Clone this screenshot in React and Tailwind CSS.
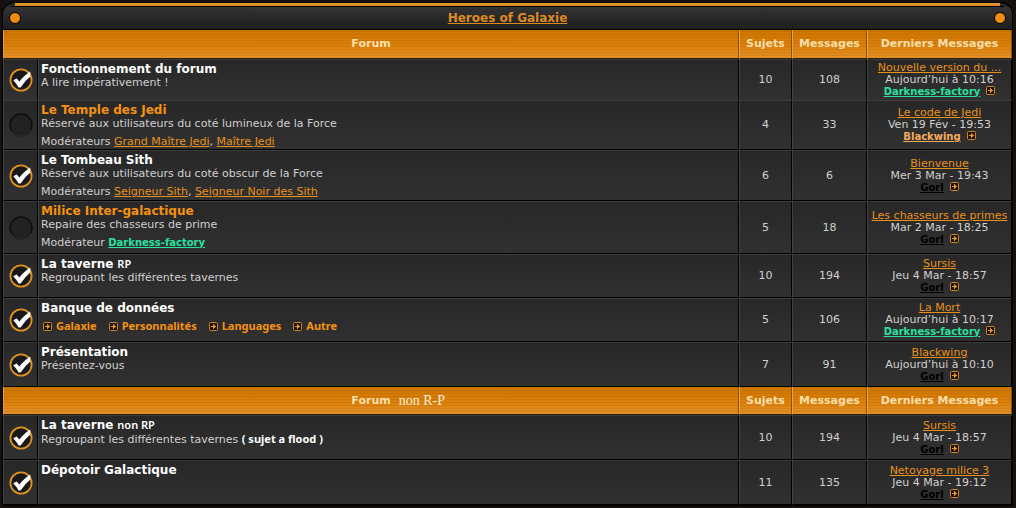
import React from "react";
import clsx from "clsx";

const sections = [
  {
    id: "rp",
    note: "",
    height: "h-[29px]",
    forums: [
      {
        title: "Fonctionnement du forum",
        description: "A lire impérativement !",
        unread: true,
        seamless: true,
        height: "h-[41px]",
        topics: 10,
        posts: 108,
        last: { title: "Nouvelle version du ...", date: "Aujourd’hui à 10:16", author: "Darkness-factory" },
      },
      {
        title: "Le Temple des Jedi",
        description: "Réservé aux utilisateurs du coté lumineux de la Force",
        moderators: ["Grand Maître Jedi", "Maître Jedi"],
        height: "h-[50px]",
        topics: 4,
        posts: 33,
        last: { title: "Le code de Jedi", date: "Ven 19 Fév - 19:53", author: "Blackwing" },
      },
      {
        title: "Le Tombeau Sith",
        description: "Réservé aux utilisateurs du coté obscur de la Force",
        moderators: ["Seigneur Sith", "Seigneur Noir des Sith"],
        unread: true,
        height: "h-[51px]",
        topics: 6,
        posts: 6,
        last: { title: "Bienvenue", date: "Mer 3 Mar - 19:43", author: "Gorl" },
      },
      {
        title: "Milice Inter-galactique",
        description: "Repaire des chasseurs de prime",
        moderators: ["Darkness-factory"],
        height: "h-[53px]",
        topics: 5,
        posts: 18,
        last: { title: "Les chasseurs de primes", date: "Mar 2 Mar - 18:25", author: "Gorl" },
      },
      {
        title: "La taverne",
        suffix: "RP",
        description: "Regroupant les différentes tavernes",
        unread: true,
        height: "h-[44px]",
        topics: 10,
        posts: 194,
        last: { title: "Sursis", date: "Jeu 4 Mar - 18:57", author: "Gorl" },
      },
      {
        title: "Banque de données",
        subforums: ["Galaxie", "Personnalités", "Languages", "Autre"],
        unread: true,
        height: "h-[44px]",
        topics: 5,
        posts: 106,
        last: { title: "La Mort", date: "Aujourd’hui à 10:17", author: "Darkness-factory" },
      },
      {
        title: "Présentation",
        description: "Présentez-vous",
        unread: true,
        height: "h-[45px]",
        topics: 7,
        posts: 91,
        last: { title: "Blackwing", date: "Aujourd’hui à 10:10", author: "Gorl" },
      },
    ],
  },
  {
    id: "non-rp",
    note: "non R-P",
    height: "h-[28px]",
    forums: [
      {
        title: "La taverne",
        suffix: "non RP",
        description: "Regroupant les différentes tavernes",
        remark: "( sujet a flood )",
        unread: true,
        height: "h-[45px]",
        topics: 10,
        posts: 194,
        last: { title: "Sursis", date: "Jeu 4 Mar - 18:57", author: "Gorl" },
      },
      {
        title: "Dépotoir Galactique",
        unread: true,
        height: "h-[45px]",
        topics: 11,
        posts: 135,
        last: { title: "Netoyage milice 3", date: "Jeu 4 Mar - 19:12", author: "Gorl" },
      },
    ],
  },
];

const userColors = {
  "Darkness-factory": "text-[10px] font-bold text-[#2be0a0]",
  Blackwing: "text-[10px] font-bold text-[#f7ac5c]",
  Gorl: "text-[10px] font-bold text-black",
};

const head = "border-l border-r border-b border-l-[#eda040] border-r-[#8a5200] border-b-[#2a1c08] p-0 text-center align-middle font-bold";

const StatusIcon = ({ unread }) => (
  <svg
    className="mx-auto block h-[26px] w-[26px]"
    viewBox="0 0 26 26"
    role="img"
    aria-label={unread ? "Nouveaux messages" : "Pas de nouveaux messages"}
  >
    {unread ? (
      <>
        <circle cx="13" cy="13" r="10.6" fill="#191919" stroke="#dd8f20" strokeWidth="1.8" />
        <path d="M5.2 13.2 8.6 11.4 11.4 14.6Q15 9.5 22.3 4.6V9.4Q17 13.5 12.6 20.6H10.6Q8.6 16.6 5.2 13.2Z" fill="#fff" />
      </>
    ) : (
      <>
        <circle cx="13" cy="13" r="11" fill="#222" stroke="#0d0d0d" strokeWidth="1.3" />
        <path d="M3 18.5A11.8 11.8 0 0 0 23 18.5" fill="none" stroke="#3c3c3c" strokeWidth="0.8" />
      </>
    )}
  </svg>
);

const ArrowIcon = () => (
  <svg className="block h-[9px] w-[9px] shrink-0" viewBox="0 0 9 9" aria-hidden="true">
    <rect x="0.5" y="0.5" width="8" height="8" rx="1" fill="#1c1408" stroke="#d08420" />
    <path d="M2 4.5H6.6M4.5 2.2V6.8" fill="none" stroke="#e8982c" />
    <path d="M4.8 2.6 7 4.5 4.8 6.4Z" fill="#e8982c" />
  </svg>
);

const Screw = () => (
  <span className="h-3 w-3 rounded-full border border-black bg-[#ef8d10]" />
);

const SectionHead = ({ note, height }) => (
  <tr
    className={clsx(
      "bg-[repeating-linear-gradient(0deg,rgba(0,0,0,0.06)_0_1px,transparent_1px_3px),linear-gradient(#cd7600,#dc800b_55%,#e39128)] text-[11px] leading-[14px] text-[#fbdfab]",
      height
    )}
  >
    <th colSpan={2} className={head}>
      <div className="grid grid-cols-[1fr_auto_1fr] items-center gap-2">
        <span className="col-start-2">Forum</span>
        <span className="text-left font-['Liberation_Serif',serif] text-[14px] font-normal text-[#fdf0d8]">
          {note}
        </span>
      </div>
    </th>
    <th className={head}>Sujets</th>
    <th className={head}>Messages</th>
    <th className={head}>Derniers Messages</th>
  </tr>
);

const ForumRow = ({ forum }) => {
  const { last } = forum;
  const cell = clsx(
    "border-t border-l border-t-[#3c3c3c] border-l-[#434343] border-r border-b border-r-black p-0",
    forum.seamless ? "border-b-[#313131]" : "border-b-black"
  );

  return (
    <tr
      className={clsx(
        "bg-linear-to-b from-[#272727] to-[#313131] text-[11px] leading-3 text-[#d0d0d0]",
        forum.height
      )}
    >
      <td className={cell}>
        <StatusIcon unread={forum.unread} />
      </td>
      <td className={clsx(cell, "pt-0.5 pl-0.5 align-top")}>
        <h2 className="flex items-center gap-1 text-[12px] leading-[14px]">
          <a href="#" className={clsx("font-bold", forum.unread ? "text-white" : "text-[#f5920f]")}>
            {forum.title}
          </a>
          {forum.suffix && (
            <span className="font-['Noto_Sans',sans-serif] text-[11px] font-semibold text-white">
              {forum.suffix}
            </span>
          )}
        </h2>
        {forum.description && (
          <p className="leading-[14px]">
            {forum.description}{" "}
            {forum.remark && (
              <span className="font-['Noto_Sans',sans-serif] font-bold text-white">
                {forum.remark}
              </span>
            )}
          </p>
        )}
        {forum.moderators && (
          <p className="mt-1 leading-[14px]">
            {forum.moderators.length > 1 ? "Modérateurs " : "Modérateur "}
            {forum.moderators.map((name, i) => (
              <React.Fragment key={name}>
                {i > 0 && ", "}
                <a href="#" className={clsx("underline", userColors[name] || "text-[#e8901c]")}>
                  {name}
                </a>
              </React.Fragment>
            ))}
          </p>
        )}
        {forum.subforums && (
          <ul className="mt-1 flex gap-3 pl-0.5 font-['Noto_Sans',sans-serif] text-[11px] leading-[14px] font-bold text-[#f5920f]">
            {forum.subforums.map((name) => (
              <li key={name}>
                <a href="#" className="flex items-center gap-1">
                  <ArrowIcon />
                  {name}
                </a>
              </li>
            ))}
          </ul>
        )}
      </td>
      <td className={clsx(cell, "text-center")}>{forum.topics}</td>
      <td className={clsx(cell, "text-center")}>{forum.posts}</td>
      <td className={clsx(cell, "text-center whitespace-nowrap")}>
        <a href="#" className="text-[#e8901c] underline">
          {last.title}
        </a>
        <p>{last.date}</p>
        <p className="flex items-start justify-center gap-1.5">
          <a href="#" className={clsx("leading-3 underline", userColors[last.author])}>
            {last.author}
          </a>
          <a href="#" aria-label="Voir le dernier message">
            <ArrowIcon />
          </a>
        </p>
      </td>
    </tr>
  );
};

export default function App() {
  return (
    <main className="min-h-screen bg-[#15110f] pt-0.5 pr-[3px] pl-0.5 font-['DejaVu_Sans',Verdana,sans-serif]">
      <div className="rounded-t-xl border border-black bg-black">
        <header className="overflow-hidden rounded-t-xl bg-[#2b2b2b]">
          <div className="mx-3 h-[3px] bg-linear-to-b from-[#e9a23c] to-[#d77f0c]" />
          <div className="mx-2 h-px bg-black" />
          <div className="flex h-[22px] items-center justify-between bg-linear-to-b from-[#333] to-[#1e1e1e] px-1.5">
            <Screw />
            <h1 className="text-[12px] leading-4 font-bold">
              <a href="#" className="text-[#dd8a22] underline">
                Heroes of Galaxie
              </a>
            </h1>
            <Screw />
          </div>
        </header>
        <table className="mt-px w-full table-fixed border-separate border-spacing-0">
          <colgroup>
            <col className="w-[35px]" />
            <col />
            <col className="w-[53px]" />
            <col className="w-[75px]" />
            <col className="w-[145px]" />
          </colgroup>
          {sections.map((section) => (
            <tbody key={section.id}>
              <SectionHead note={section.note} height={section.height} />
              {section.forums.map((forum) => (
                <ForumRow key={forum.title} forum={forum} />
              ))}
            </tbody>
          ))}
        </table>
      </div>
    </main>
  );
}
